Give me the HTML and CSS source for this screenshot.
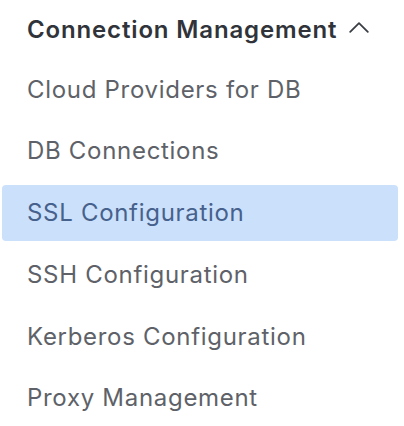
FILE: index.html
```html
<!DOCTYPE html>
<html>
<head>
<meta charset="utf-8">
<link rel="stylesheet" href="styles.css">
</head>
<body>
<nav class="menu">
  <div class="group-head">
    <span class="group-title">Connection Management</span>
    <svg class="chevron" width="20" height="11" viewBox="0 0 20 11"><path d="M1.2 9.8 L10 1.2 L18.8 9.8" fill="none" stroke="#3a3e44" stroke-width="1.8" stroke-linecap="round" stroke-linejoin="round"/></svg>
  </div>
  <ul class="items">
    <li class="item">Cloud Providers for DB</li>
    <li class="item">DB Connections</li>
    <li class="item active">SSL Configuration</li>
    <li class="item">SSH Configuration</li>
    <li class="item">Kerberos Configuration</li>
    <li class="item">Proxy Management</li>
  </ul>
</nav>
</body>
</html>
```
FILE: styles.css
```css
* { box-sizing: border-box; }
html, body { margin: 0; padding: 0; background: #fff; }
body {
  font-family: Inter, "Noto Sans", sans-serif;
  font-size: 24px;
  letter-spacing: 0.7px;
  width: 404px;
  height: 426px;
  overflow: hidden;
}
.menu {
  padding: 1px 6px 0 2px;
}
.group-head {
  height: 56px;
  display: flex;
  align-items: center;
  gap: 12px;
  padding-left: 25px;
  color: #30343a;
  font-weight: 600;
  letter-spacing: 0.85px;
}
.chevron { margin-top: -3px; }
.items {
  list-style: none;
  margin: 4px 0 0;
  padding: 0;
  display: flex;
  flex-direction: column;
  gap: 5.8px;
}
.item {
  height: 56px;
  display: flex;
  align-items: center;
  padding-left: 25px;
  color: #5e6268;
  border-radius: 4px;
}
.item.active {
  background: #cbe0fb;
  color: #46618b;
}
```
